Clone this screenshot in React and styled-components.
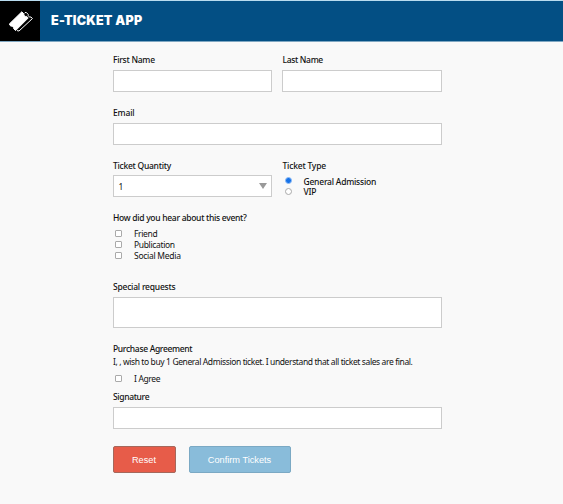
import React from 'react';
import styled, { createGlobalStyle } from 'styled-components';

const GlobalStyle = createGlobalStyle`
  * { box-sizing: border-box; }
  body {
    margin: 0;
    background: #f9f9f9;
    color: #111;
    font-family: "Noto Sans", "Open Sans", sans-serif;
    font-size: 8.5px;
    overflow: hidden;
  }
`;

const Page = styled.div`
  height: 504px;
  background: #f9f9f9;
`;

const Header = styled.header`
  display: flex;
  height: 42px;
  background: #034f84;
  border-top: 1px solid #b9dcef;
  border-bottom: 1px solid #7fa7c2;
`;

const LogoBox = styled.div`
  width: 40px;
  height: 40px;
  background: #000;
`;

const Brand = styled.h1`
  margin: 0 0 0 11px;
  color: #fff;
  font: 900 12.5px/40px Inter, "Liberation Sans", sans-serif;
  letter-spacing: ${(p) => p.$spacing}px;
  white-space: nowrap;
`;

const Form = styled.form`
  width: 329px;
  margin: 12px 0 0 112.5px;
`;

const Columns = styled.div`
  display: grid;
  grid-template-columns: 159px 159.5px;
  column-gap: 10.5px;
`;

const Field = styled.div`
  height: ${(p) => p.$height}px;
`;

const Label = styled.div`
  height: ${(p) => p.$height || 16}px;
  padding-left: 0.5px;
  line-height: 12px;
  font-weight: ${(p) => p.$weight || 500};
  letter-spacing: ${(p) => p.$spacing ?? -0.26}px;
  white-space: nowrap;
`;

const Input = styled.input`
  display: block;
  width: 100%;
  height: 22px;
  padding: 0 6px;
  border: 1px solid #ccc;
  border-radius: 0;
  background: #fff;
  outline: none;
`;

const TextArea = styled.textarea`
  display: block;
  width: 100%;
  height: 31px;
  border: 1px solid #ccc;
  background: #fff;
  resize: none;
  outline: none;
`;

const Select = styled.div`
  display: flex;
  align-items: center;
  justify-content: space-between;
  width: 100%;
  height: 22px;
  padding: 0 4px 0 5px;
  border: 1px solid #ccc;
  background: #fff;
`;

const Arrow = styled.span`
  border: 4px solid transparent;
  border-top: 6px solid #999;
  border-bottom: 0;
`;

const Option = styled.label`
  display: flex;
  align-items: center;
  height: ${(p) => p.$height || 11}px;
  padding-left: 2.5px;
`;

const OptionText = styled.span`
  margin-left: 12px;
  line-height: 11px;
  font-weight: ${(p) => p.$weight || 400};
  letter-spacing: ${(p) => p.$spacing ?? -0.35}px;
  white-space: nowrap;
`;

const Box = styled.input`
  appearance: none;
  flex: none;
  width: 7px;
  height: 7px;
  margin: 0 0 1px;
  border: 1px solid #aaa;
  border-radius: ${(p) => (p.type === 'radio' ? '50%' : '1px')};
  background: #fff;
  &:checked {
    border-color: #8fbdf7;
    background: #1672e8;
  }
`;

const Actions = styled.div`
  display: flex;
  gap: 13px;
`;

const Button = styled.button`
  width: ${(p) => p.$width}px;
  height: 27px;
  padding: 0;
  border: 1px solid ${(p) => p.$border};
  border-radius: 2px;
  background: ${(p) => p.$color};
  color: #fff;
  font: 9.2px "Liberation Sans", Arial, sans-serif;
`;

function TicketLogo() {
  return (
    <svg width="40" height="40" viewBox="0 0 40 40">
      <path
        d="M21.8 10.8 23.8 12.8C23.6 14.6 25 15.8 26.7 15.4L28.2 17 15.6 29.6 13.6 27.6C13.6 25.8 12.4 24.8 10.8 25.2L9.3 23Z"
        fill="#fff"
        stroke="#fff"
        strokeLinejoin="round"
      />
      <path
        d="M24.6 12.2 26 11.2 28.2 13.4C27.8 15.2 29.2 16.4 31 16L32.4 17.6 19 30 17 29.6"
        fill="none"
        stroke="#fff"
        strokeWidth="1"
        strokeLinejoin="round"
      />
    </svg>
  );
}

export default function App() {
  return (
    <Page>
      <GlobalStyle />
      <Header>
        <LogoBox><TicketLogo /></LogoBox>
        <Brand $spacing={0.22}>E-TICKET APP</Brand>
      </Header>
      <Form onSubmit={(e) => e.preventDefault()}>
        <Columns>
          <Field $height={53}><Label>First Name</Label><Input /></Field>
          <Field $height={53}><Label $spacing={-0.33}>Last Name</Label><Input /></Field>
        </Columns>
        <Field $height={53}><Label $spacing={-0.15}>Email</Label><Input /></Field>
        <Columns>
          <Field $height={52}>
            <Label $height={15}>Ticket Quantity</Label>
            <Select><span>1</span><Arrow /></Select>
          </Field>
          <Field $height={52}>
            <Label $height={16} $spacing={-0.2}>Ticket Type</Label>
            <Option $height={10}><Box type="radio" name="type" defaultChecked /><OptionText $weight={500} $spacing={-0.22}>General Admission</OptionText></Option>
            <Option><Box type="radio" name="type" /><OptionText $weight={500} $spacing={-0.2}>VIP</OptionText></Option>
          </Field>
        </Columns>
        <Field $height={69}>
          <Label $spacing={-0.29}>How did you hear about this event?</Label>
          <Option><Box type="checkbox" /><OptionText>Friend</OptionText></Option>
          <Option><Box type="checkbox" /><OptionText>Publication</OptionText></Option>
          <Option><Box type="checkbox" /><OptionText $spacing={-0.27}>Social Media</OptionText></Option>
        </Field>
        <Field $height={62}><Label $spacing={-0.22}>Special requests</Label><TextArea /></Field>
        <Field $height={48}>
          <Label $height={13} $spacing={-0.32}>Purchase Agreement</Label>
          <Label $height={17} $weight={400} $spacing={-0.39}>I, , wish to buy 1 General Admission ticket. I understand that all ticket sales are final.</Label>
          <Option><Box type="checkbox" /><OptionText>I Agree</OptionText></Option>
        </Field>
        <Field $height={55}><Label $spacing={-0.35}>Signature</Label><Input /></Field>
        <Actions>
          <Button type="reset" $width={63} $color="#e75c49" $border="#a5685c">Reset</Button>
          <Button type="submit" $width={102} $color="#89bcda" $border="#7ba9c4">Confirm Tickets</Button>
        </Actions>
      </Form>
    </Page>
  );
}
